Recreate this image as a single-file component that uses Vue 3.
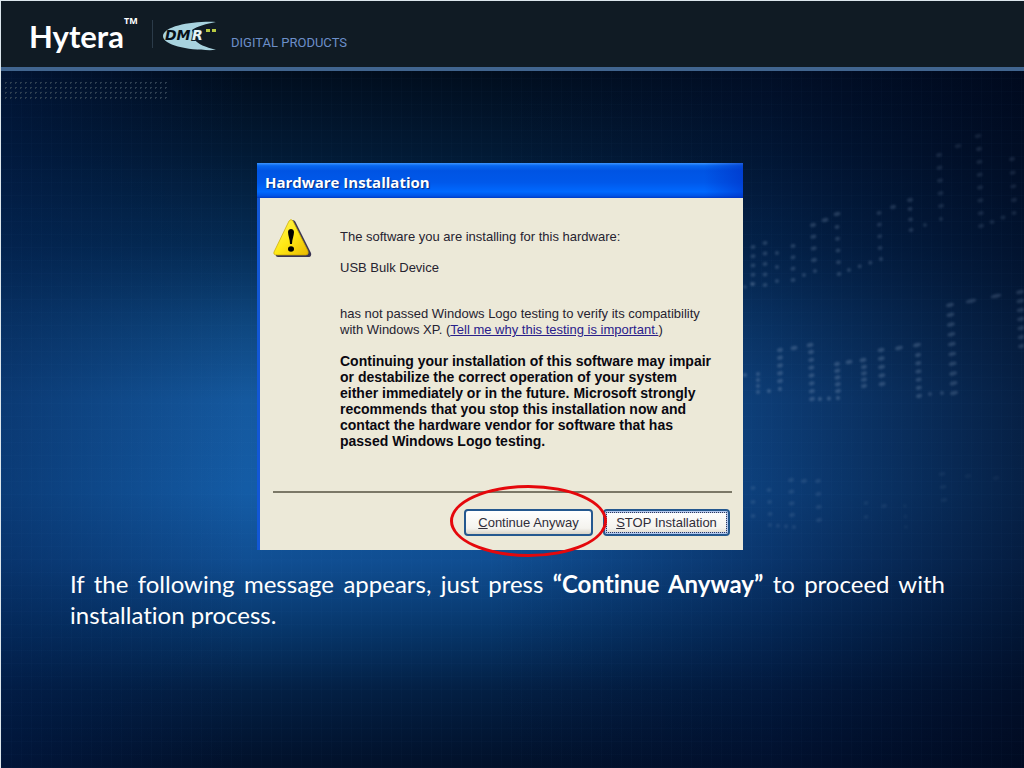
<script setup>
const range = (n) => Array.from({ length: n }, (_, i) => i)

// Each trail is [x1, y1, x2, y2, count, dot width, opacity]
const trails = [
  [13, 137, 13, 174, 5, 5, 0.3], [25, 133, 25, 175, 5, 5, 0.3], [37, 143, 37, 171, 3, 4, 0.3],
  [53, 136, 53, 170, 4, 5, 0.3], [64, 165, 75, 161, 2, 4, 0.3], [73, 115, 74, 150, 4, 6, 0.3],
  [85, 110, 97, 104, 2, 7, 0.3], [97, 117, 99, 164, 5, 5, 0.3], [109, 160, 141, 149, 4, 4, 0.3],
  [139, 103, 140, 138, 4, 5, 0.26], [153, 97, 170, 90, 2, 6, 0.26], [170, 99, 171, 120, 3, 5, 0.26],
  [185, 115, 201, 109, 2, 4, 0.22], [199, 45, 201, 96, 5, 6, 0.2], [218, 36, 238, 26, 2, 7, 0.16],
  [239, 39, 241, 116, 7, 6, 0.2], [252, 112, 274, 103, 3, 5, 0.2], [272, 49, 274, 90, 4, 6, 0.18],
  [5, 177, 12, 174, 2, 3, 0.3],
  [5, 265, 6, 265, 1, 4, 0.4], [18, 264, 18, 282, 4, 4, 0.35], [29, 281, 40, 279, 2, 4, 0.4],
  [40, 240, 40, 271, 5, 6, 0.35], [54, 238, 70, 235, 2, 7, 0.35], [71, 242, 72, 289, 7, 6, 0.35],
  [80, 289, 98, 288, 3, 4, 0.4], [97, 254, 98, 281, 5, 6, 0.35], [109, 252, 123, 250, 2, 7, 0.35],
  [124, 257, 124, 276, 4, 6, 0.33], [141, 240, 142, 274, 5, 7, 0.33], [159, 238, 177, 235, 2, 8, 0.33],
  [178, 245, 179, 286, 6, 6, 0.33], [190, 284, 202, 283, 2, 4, 0.28], [210, 195, 214, 283, 10, 8, 0.3],
  [231, 191, 256, 186, 2, 11, 0.28], [280, 182, 282, 236, 7, 8, 0.26],
  [13, 378, 13, 406, 3, 5, 0.2], [29, 380, 30, 404, 3, 5, 0.2],
  [30, 415, 54, 417, 4, 4, 0.18], [51, 370, 52, 405, 4, 6, 0.2], [64, 371, 64, 371, 1, 6, 0.2],
  [78, 371, 79, 410, 4, 6, 0.18], [126, 393, 126, 407, 2, 5, 0.12], [144, 396, 144, 396, 1, 6, 0.12],
  [165, 396, 166, 417, 3, 4, 0.08], [202, 364, 204, 390, 3, 7, 0.1], [228, 366, 256, 368, 2, 7, 0.08],
]

const dots = trails.flatMap(([x1, y1, x2, y2, n, w, o]) =>
  range(n).map((i) => {
    const t = n > 1 ? i / (n - 1) : 0
    return { x: x1 + (x2 - x1) * t, y: y1 + (y2 - y1) * t, w, o }
  })
)
</script>

<template>
  <main class="slide">
    <svg class="trails" viewBox="0 0 284 440" aria-hidden="true">
      <ellipse
        v-for="(d, i) in dots" :key="i"
        :cx="d.x" :cy="d.y" :rx="d.w / 2" ry="2" :opacity="d.o"
        :transform="`rotate(-14 ${d.x} ${d.y})`"
      />
    </svg>

    <header class="banner">
      <div class="brand">Hytera<sup>TM</sup></div>
      <svg class="dmr" viewBox="0 0 58 32" role="img" aria-label="DMR">
        <path d="M54 2C30 1 2 6 1 16C1 26 30 31 54 30C43 27 36 24 33 20L30 10C36 6 44 4 54 2Z" />
        <text x="3" y="20" class="dark">DM</text>
        <text x="30" y="20" class="light">R</text>
        <rect x="44" y="9" width="4" height="3" />
        <rect x="50" y="9" width="4" height="3" />
      </svg>
      <div class="tagline">DIGITAL PRODUCTS</div>
    </header>
    <div class="dot-band"></div>

    <section class="dialog" aria-labelledby="dialog-title">
      <h1 id="dialog-title">Hardware Installation</h1>
      <div class="content">
        <svg class="warning" viewBox="0 0 40 40" role="img" aria-label="Warning">
          <defs>
            <linearGradient id="yellow" x1="0" y1="0" x2="1" y2="1">
              <stop offset="0" stop-color="#fff568" />
              <stop offset=".5" stop-color="#ffe916" />
              <stop offset="1" stop-color="#e9b800" />
            </linearGradient>
          </defs>
          <path d="M19 1Q22 1 23 4L38 34Q39 38 35 38H5Q2 38 3 35Z" fill="#393453" />
          <path d="M16 2Q18 -1 20 2L35 32Q36 36 33 36H4Q0 36 1 33Z" fill="url(#yellow)" stroke="#c8a700" stroke-width=".7" />
          <path d="M15 13C15 9 21 9 21 13C21 17 19 20 19 25H17C17 20 15 17 15 13Z" />
          <ellipse cx="18" cy="30" rx="3" ry="2.7" />
        </svg>
        <div class="copy">
          <p>The software you are installing for this hardware:</p>
          <p class="device">USB Bulk Device</p>
          <p>
            has not passed Windows Logo testing to verify its compatibility<br>
            with Windows XP. (<a href="#why">Tell me why this testing is important.</a>)
          </p>
          <p class="strong">
            Continuing your installation of this software may impair<br>
            or destabilize the correct operation of your system<br>
            either immediately or in the future. Microsoft strongly<br>
            recommends that you stop this installation now and<br>
            contact the hardware vendor for software that has<br>
            passed Windows Logo testing.
          </p>
        </div>
      </div>
      <div class="actions">
        <div class="marked">
          <button type="button"><u>C</u>ontinue Anyway</button>
          <span class="ring"></span>
        </div>
        <button type="button" class="stop"><u>S</u>TOP Installation</button>
      </div>
    </section>

    <p class="caption">
      If the following message appears, just press <b>“Continue Anyway”</b> to proceed with installation process.
    </p>
  </main>
</template>

<style>
body { margin: 0; background: #010d22; }
</style>

<style scoped>
* { box-sizing: border-box; }
.slide {
  position: relative;
  min-height: 100vh;
  overflow: hidden;
  border-top: 1px solid #dce6ec;
  border-left: 1px solid #dce6ec;
  background:
    repeating-linear-gradient(0deg, rgb(90 160 230 / 2%) 0 1px, transparent 1px 13px),
    repeating-linear-gradient(90deg, rgb(90 160 230 / 2%) 0 1px, transparent 1px 10px),
    linear-gradient(90deg, rgb(0 25 70 / 50%), transparent 24%, transparent 48%, rgb(0 15 50 / 40%) 75%, rgb(0 8 30 / 70%)),
    linear-gradient(#010d1d 9%, #021a35 20%, #052c55 32%, #0e467e 42%, #15599f 52%, #145ca6 64%, #104e92 73%, #07366a 82%, #031f43 90%, #011029 100%);
}
.trails { position: absolute; top: 109px; right: 0; width: 284px; fill: #8ea7c5; filter: blur(1px); opacity: .8; }
.banner {
  position: relative;
  display: flex;
  height: 70px;
  padding-left: 28px;
  border-bottom: 4px solid #41658f;
  background: #101b24;
}
.brand { display: flex; width: 124px; height: 28px; margin-top: 19px; border-right: 1px solid #2b3b49; color: #fff; font: 700 31px/32px Lato, sans-serif; white-space: nowrap; }
.brand sup { font: 700 9px/9px "Open Sans", sans-serif; margin-top: -4px; }
.dmr { width: 58px; height: 32px; margin: 19px 0 0 9px; fill: #a8d3df; }
.dmr text { font: italic 700 14px "DejaVu Sans", sans-serif; }
.dmr .dark { fill: #071018; }
.dmr .light { fill: #e8f4f5; stroke: #10242f; stroke-width: 2; paint-order: stroke; }
.dmr rect { fill: #b9cb42; }
.tagline { margin: 32px 0 0 11px; color: #6c8fc9; font: 13px/20px Roboto, sans-serif; white-space: nowrap; }
.dot-band { width: 165px; height: 22px; margin: 9px 0 0 2px; background: radial-gradient(circle, #2d3e50 0 1px, transparent 1px) 0 0 / 5px 5px; }
.dialog {
  position: relative;
  width: 486px;
  margin: 61px auto 0 256px;
  border-left: 3px solid #1257d6;
  background: #ece9d8;
  color: #262330;
  font: 13px/16px "Liberation Sans", sans-serif;
}
h1 {
  height: 35px;
  margin: 0 0 0 -3px;
  padding-left: 8px;
  background: linear-gradient(90deg, transparent 92%, rgb(0 40 190 / 50%)), linear-gradient(#3d95ff 0, #0867ef 8%, #0054e3 22%, #0058ea 55%, #0069ff 82%, #0054e6 94%, #003bc4);
  color: #fff;
  font: 700 15px/38px "Open Sans", sans-serif;
  text-shadow: 1px 1px 1px #0a2a80;
}
.content { display: flex; padding: 21px 14px 0 13px; }
.warning { flex: none; width: 40px; height: 40px; }
.copy { margin: 10px 0 0 27px; white-space: nowrap; }
.copy p { margin: 0 0 15px; }
.copy .device { margin-bottom: 30px; }
.copy .strong { margin: 0; color: #0a0810; font-size: 14px; font-weight: 700; }
.copy a { color: #29208a; }
.actions { display: flex; justify-content: flex-end; gap: 10px; margin: 42px 11px 0 13px; padding: 16px 2px 14px 0; border-top: 2px solid #7b7867; }
.marked { position: relative; }
button {
  display: block;
  width: 129px;
  height: 27px;
  padding: 0;
  border: 2px solid #24588f;
  border-radius: 4px;
  background: linear-gradient(#fff, #f4f3ee 75%, #d9d4c8);
  color: #302d39;
  font: 13px/22px "Liberation Sans", sans-serif;
  white-space: nowrap;
}
.stop { width: 127px; box-shadow: inset 0 0 0 2px #b5c9ef; outline: 1px dotted #303a5a; outline-offset: -4px; }
.ring { position: absolute; inset: -24px -14px -21px -14px; border: 3px solid #e5080c; border-radius: 50%; pointer-events: none; z-index: 1; }
.caption { position: relative; margin: 18px 79px 0 69px; color: #fff; font: 24px/31px Lato, sans-serif; font-variant-ligatures: none; text-align: justify; }
</style>
